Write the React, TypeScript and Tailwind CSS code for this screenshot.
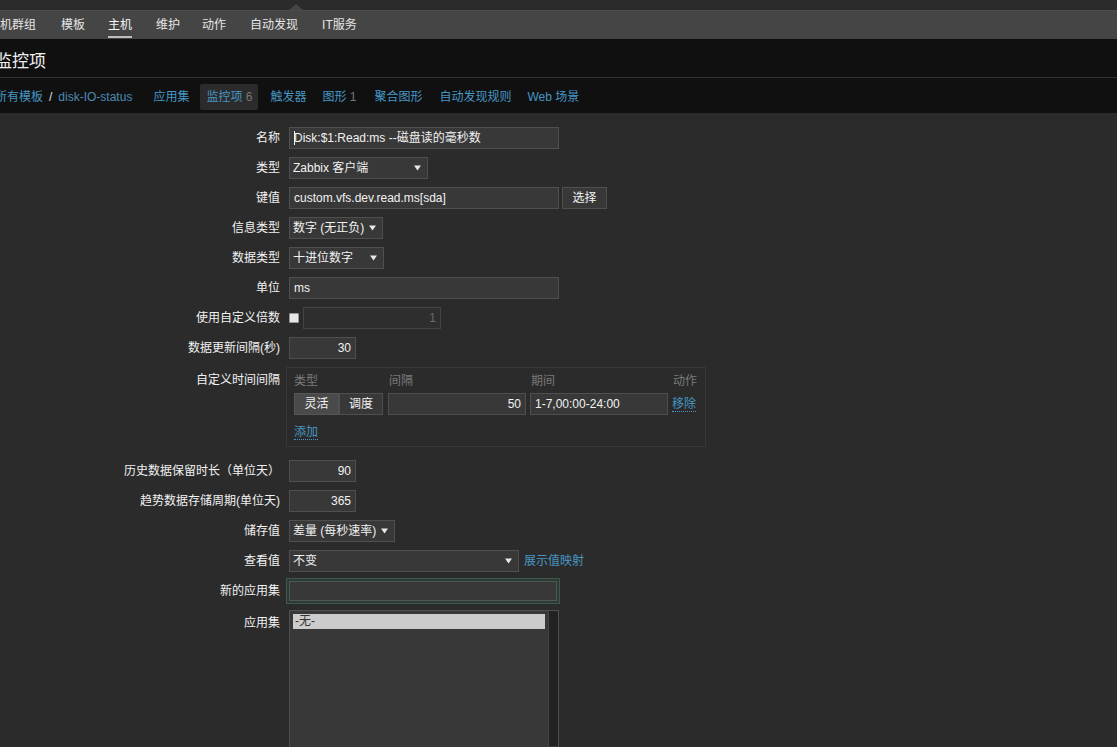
import React from "react";

const font = { fontFamily: '"Liberation Sans", "Noto Sans CJK SC", sans-serif' };

function Arrow() {
  return (
    <svg width="7" height="6" viewBox="0 0 7 6" className="shrink-0">
      <path d="M0 0.5 H7 L3.5 5.5 Z" fill="#e8e8e8" />
    </svg>
  );
}

function Select({ w, text }: { w: string; text: string }) {
  return (
    <div className={`${w} h-[22px] bg-[#383838] border border-[#4f4f4f] flex items-center justify-between pl-[3px] pr-[6px] text-[12px] text-[#f2f2f2]`}>
      <span>{text}</span>
      <Arrow />
    </div>
  );
}

function Input({ w, text, right, dim }: { w: string; text?: string; right?: boolean; dim?: boolean }) {
  return (
    <div
      className={`${w} h-[22px] border flex items-center px-[4px] text-[12px] ${right ? "justify-end" : ""} ${dim ? "text-[#6a6a6a] bg-[#2e2e2e] border-[#444]" : "text-[#f2f2f2] bg-[#383838] border-[#4f4f4f]"}`}
    >
      {text}
    </div>
  );
}

function Row({ label, children, top }: { label: string; children: React.ReactNode; top?: boolean }) {
  return (
    <div className={`flex ${top ? "items-start" : "items-center"} gap-[9px]`}>
      <div className={`w-[280px] shrink-0 text-right text-[12px] text-[#f2f2f2] ${top ? "pt-[4px]" : ""}`}>{label}</div>
      {children}
    </div>
  );
}

export default function App() {
  return (
    <div style={font} className="w-[1117px] h-[747px] overflow-hidden bg-[#2b2b2b] flex flex-col">
      {/* top strip */}
      <div className="h-[10px] bg-[#2b2b2b] relative shrink-0">
        <div className="absolute left-[289px] top-[4px] w-0 h-0 border-l-[7px] border-r-[7px] border-b-[6px] border-l-transparent border-r-transparent border-b-[#454545]" />
      </div>
      {/* main nav */}
      <div className="h-[29px] bg-[#454545] border-t border-[#4d4d4d] flex items-center text-[12px] text-[#e6e6e6] shrink-0">
        <div className="flex items-center ml-[-12px]">
          <span className="mr-[25px]">主机群组</span>
          <span className="mr-[23px]">模板</span>
          <span className="mr-[24px] relative text-[#f5f5f5]">
            主机
            <span className="absolute left-0 right-0 bottom-[-4px] h-[2px] bg-[#bdbdbd]" />
          </span>
          <span className="mr-[22px]">维护</span>
          <span className="mr-[24px]">动作</span>
          <span className="mr-[24px]">自动发现</span>
          <span>IT服务</span>
        </div>
      </div>
      {/* title */}
      <div className="h-[39px] bg-[#101010] flex items-center pt-[7px] shrink-0 border-b border-[#333]">
        <span className="ml-[-5px] text-[17px] text-[#f0f0f0]">监控项</span>
      </div>
      {/* sub nav */}
      <div className="h-[35px] bg-[#101010] flex items-center pt-[2px] text-[12px] text-[#4796c4] shrink-0">
        <div className="flex items-center ml-[-5px]">
          <span>所有模板</span>
          <span className="ml-[6px] mr-[6px] text-[#e0e0e0]">/</span>
          <span className="text-[#4d8bb5]">disk-IO-status</span>
          <span className="ml-[21px]">应用集</span>
          <span className="ml-[11px] bg-[#2b2b2b] px-[6px] py-[4px] rounded-[2px]">监控项 <span className="text-[#777]">6</span></span>
          <span className="ml-[12px]">触发器</span>
          <span className="ml-[16px]">图形 <span className="text-[#777]">1</span></span>
          <span className="ml-[18px]">聚合图形</span>
          <span className="ml-[17px]">自动发现规则</span>
          <span className="ml-[16px]">Web 场景</span>
        </div>
      </div>
      {/* form */}
      <div className="flex flex-col gap-[8px] pt-[14px]">
        <Row label="名称">
          <div className="w-[270px] h-[22px] bg-[#383838] border border-[#4f4f4f] flex items-center px-[4px] text-[12px] text-[#f2f2f2]">
            <span className="w-px h-[14px] bg-[#f2f2f2] mr-[-1px]" />
            Disk:$1:Read:ms --磁盘读的毫秒数
          </div>
        </Row>
        <Row label="类型">
          <Select w="w-[139px]" text="Zabbix 客户端" />
        </Row>
        <Row label="键值">
          <div className="flex items-center gap-[3px]">
            <Input w="w-[270px]" text="custom.vfs.dev.read.ms[sda]" />
            <div className="w-[45px] h-[22px] bg-[#383838] border border-[#4f4f4f] flex items-center justify-center text-[12px] text-[#f2f2f2]">选择</div>
          </div>
        </Row>
        <Row label="信息类型">
          <Select w="w-[94px]" text="数字 (无正负)" />
        </Row>
        <Row label="数据类型">
          <Select w="w-[95px]" text="十进位数字" />
        </Row>
        <Row label="单位">
          <Input w="w-[270px]" text="ms" />
        </Row>
        <Row label="使用自定义倍数">
          <div className="flex items-center gap-[4px]">
            <div className="w-[10px] h-[10px] bg-[#e8e8e8] border border-[#999] rounded-[1px]" />
            <Input w="w-[138px]" text="1" right dim />
          </div>
        </Row>
        <Row label="数据更新间隔(秒)">
          <Input w="w-[67px]" text="30" right />
        </Row>
        <Row label="自定义时间间隔" top>
          <div className="ml-[-3px] mb-[5px] w-[420px] h-[80px] border border-[#383838] px-[7px] pt-[6px] text-[12px]">
            <div className="flex text-[#7a7a7a] h-[14px] items-center">
              <span className="w-[95px]">类型</span>
              <span className="w-[142px]">间隔</span>
              <span className="w-[142px]">期间</span>
              <span className="flex-1 text-right pr-[1px]">动作</span>
            </div>
            <div className="flex items-center mt-[5px]">
              <div className="flex w-[90px]">
                <div className="w-[45px] h-[22px] bg-[#4a4a4a] border border-[#555] flex items-center justify-center text-[#f2f2f2]">灵活</div>
                <div className="w-[44px] h-[22px] bg-[#383838] border border-[#4f4f4f] flex items-center justify-center text-[#f2f2f2]">调度</div>
              </div>
              <div className="ml-[4px]">
                <Input w="w-[138px]" text="50" right />
              </div>
              <div className="ml-[4px]">
                <Input w="w-[138px]" text="1-7,00:00-24:00" />
              </div>
              <span className="ml-[4px] text-[#4796c4] border-b border-dotted border-[#4796c4] leading-[14px]">移除</span>
            </div>
            <div className="mt-[8px]">
              <span className="text-[#4796c4] border-b border-dotted border-[#4796c4] leading-[14px]">添加</span>
            </div>
          </div>
        </Row>
        <Row label="历史数据保留时长（单位天）">
          <Input w="w-[67px]" text="90" right />
        </Row>
        <Row label="趋势数据存储周期(单位天)">
          <Input w="w-[67px]" text="365" right />
        </Row>
        <Row label="储存值">
          <Select w="w-[106px]" text="差量 (每秒速率)" />
        </Row>
        <Row label="查看值">
          <div className="flex items-center gap-[5px]">
            <Select w="w-[230px]" text="不变" />
            <span className="text-[12px] text-[#4796c4]">展示值映射</span>
          </div>
        </Row>
        <Row label="新的应用集">
          <div className="ml-[-3px] my-[-2px] p-[2px] bg-[#2f3a35] border border-[#3b5a4c]">
            <div className="w-[268px] h-[20px] bg-[#383838] border border-[#4a5a52]" />
          </div>
        </Row>
        <Row label="应用集" top>
          <div className="w-[270px] h-[140px] bg-[#383838] border border-[#4f4f4f] flex p-[3px] pr-0">
            <div className="flex-1">
              <div className="h-[15px] bg-[#cccccc] text-[12px] text-[#333] leading-[15px] pl-[2px]">-无-</div>
            </div>
            <div className="w-[10px] bg-[#222] ml-[3px] mt-[-3px] border-l border-[#444]" />
          </div>
        </Row>
      </div>
    </div>
  );
}
